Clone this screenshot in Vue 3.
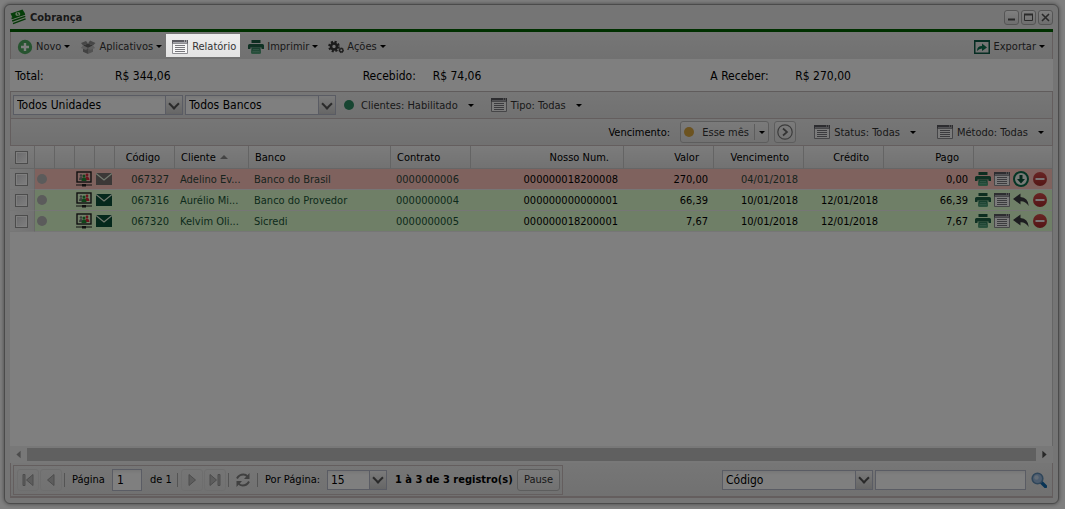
<script setup>
import { ref } from 'vue'

const unit = ref('Todos Unidades')
const bank = ref('Todos Bancos')
const pageNumber = ref('1')
const perPage = ref('15')
const searchField = ref('Código')
const searchText = ref('')

const totals = [
  { label: 'Total:', value: 'R$ 344,06', kind: 'all' },
  { label: 'Recebido:', value: 'R$ 74,06', kind: 'received' },
  { label: 'A Receber:', value: 'R$ 270,00', kind: 'open' }
]

const rows = [
  { code: '067327', client: 'Adelino Ev...', bank: 'Banco do Brasil', contract: '0000000006', number: '000000018200008', value: '270,00', due: '04/01/2018', credit: '', paid: '0,00', open: true },
  { code: '067316', client: 'Aurélio Mi...', bank: 'Banco do Provedor', contract: '0000000004', number: '000000000000001', value: '66,39', due: '10/01/2018', credit: '12/01/2018', paid: '66,39', open: false },
  { code: '067320', client: 'Kelvim Oli...', bank: 'Sicredi', contract: '0000000005', number: '000000018200001', value: '7,67', due: '10/01/2018', credit: '12/01/2018', paid: '7,67', open: false }
]
</script>

<template>
  <svg class="defs" aria-hidden="true">
    <defs>
      <linearGradient id="g-print" x1="0" y1="0" x2="0" y2="1">
        <stop offset="0" stop-color="#2c7a58" />
        <stop offset="1" stop-color="#5aa87f" />
      </linearGradient>
      <linearGradient id="g-remove" x1="0" y1="0" x2="0" y2="1">
        <stop offset="0" stop-color="#d04a48" />
        <stop offset="1" stop-color="#a82c2c" />
      </linearGradient>
    </defs>
    <symbol id="i-money" viewBox="0 0 16 16">
      <path d="M1 6.500 14 2.500 15.500 10 3.500 15.500Z" fill="#d8ecd0" />
      <path d="M1.500 9.500 15 5M2.200 12 15.300 7.300M3 14.600 15.600 9.800" stroke="#0a7010" stroke-width="1.400" />
      <path d="M.500 4.500 12.500 .500 15 4.500 3 9.500Z" fill="#0a7d12" />
      <ellipse cx="7.800" cy="5" rx="2.500" ry="2.100" fill="#d5f0c8" />
      <path d="M7.300 3.600 8.400 6.400" stroke="#0a7d12" stroke-width="1.100" />
    </symbol>
    <symbol id="i-add" viewBox="0 0 16 16">
      <circle cx="8" cy="8" r="7.200" fill="#4ea860" />
      <path d="M8 4v8M4 8h8" stroke="#fff" stroke-width="2.400" />
    </symbol>
    <symbol id="i-box" viewBox="0 0 16 16">
      <path d="M3 7 8 9v6l-5-2.200Z" fill="#858585" />
      <path d="M13 7 8 9v6l5-2.200Z" fill="#a5a5a5" />
      <path d="M3 6.500 8 4.500l5 2L8 9Z" fill="#666" />
      <path d="M3 6.500 1 4l5-2 2 2.500ZM13 6.500 15.500 4 10 1.500 8 4.500Z" fill="#8f8f8f" />
      <path d="M3 6.500.800 9 6 11l2-2ZM13 6.500 15.200 9 10 11 8 9Z" fill="#bcbcbc" />
    </symbol>
    <symbol id="i-list" viewBox="0 0 16 14">
      <path d="M.500 3h15v10.500H.500Z" fill="#f6f6f6" stroke="#8c8c90" />
      <path d="M0 0h16v3.500H0Z" fill="#5a5a60" />
      <path d="M1 2.500h14" stroke="#a4a4aa" />
      <path d="M12 1h1M14 1h1" stroke="#ddd" />
      <path d="M3 5.500h10M3 7.500h10M3 9.500h10M3 11.500h10" stroke="#77777c" />
    </symbol>
    <symbol id="i-print" viewBox="0 0 16 14">
      <path d="M3.500 0h9v3h-9Z" fill="#1a5a40" />
      <path d="M1.500 4h13q1.500 0 1.500 1.500V9h-2.500V7.500h-11V9H0V5.500Q0 4 1.500 4Z" fill="#1f6347" />
      <path d="M3.500 7.500h9L13 12.500q0 1.500-1.500 1.500h-7Q3 14 3 12.500Z" fill="url(#g-print)" />
      <path d="M5 9.500h6M4.500 11.500h7" stroke="#75b597" stroke-width=".7" />
    </symbol>
    <symbol id="i-gears" viewBox="0 0 16 14">
      <circle cx="6" cy="6.500" r="4.700" fill="none" stroke="#383838" stroke-width="2.200" stroke-dasharray="2.100 1.590" />
      <circle cx="6" cy="6.500" r="3" fill="none" stroke="#383838" stroke-width="2.600" />
      <circle cx="13.300" cy="10.300" r="1.700" fill="none" stroke="#383838" stroke-width="1.400" />
      <circle cx="13.300" cy="10.300" r="2.400" fill="none" stroke="#383838" stroke-width="1" stroke-dasharray="1 .9" />
    </symbol>
    <symbol id="i-export" viewBox="0 0 16 14">
      <rect x=".75" y=".75" width="14.500" height="12.500" fill="none" stroke="#0c5a46" stroke-width="1.500" />
      <path d="M0 0h16v2H0Z" fill="#0c5a46" />
      <path d="M3 11q0-5 5-5V3.500L13 7.500 8 11V8.500Q5 8.500 3 11Z" fill="#0c7050" />
    </symbol>
    <symbol id="i-screen" viewBox="0 0 16 16">
      <rect x="1" y="1" width="14" height="10" fill="none" stroke="#202020" stroke-width="1.400" />
      <circle cx="5" cy="4.500" r="1.300" fill="#777" /><path d="M3 9q0-3 2-3t2 3Z" fill="#777" />
      <circle cx="11" cy="4" r="1.400" fill="#d8283c" /><path d="M9 9q0-3.500 2-3.500t2.500 3.500Z" fill="#d8283c" />
      <circle cx="8" cy="5" r="1.500" fill="#238a35" /><path d="M5.500 10q0-3.500 2.500-3.500T10.500 10Z" fill="#238a35" />
      <path d="M0 14h6M10 14h6" stroke="#202020" stroke-width="1" />
      <path d="M6 13h4v2.500H6Z" fill="#202020" />
    </symbol>
    <symbol id="i-mail" viewBox="0 0 16 12">
      <path d="M0 0h16v12H0Z" fill="currentColor" />
      <path d="M0 .500 8 7 16 .500" fill="none" stroke="#e8f5e0" stroke-width="1.200" />
    </symbol>
    <symbol id="i-down" viewBox="0 0 16 16">
      <circle cx="8" cy="8" r="7" fill="#eef5ee" stroke="#0b6b4a" stroke-width="2" />
      <path d="M6.500 4h3v4H12l-4 4.500L4 8h2.500Z" fill="#0a5038" />
    </symbol>
    <symbol id="i-reply" viewBox="0 0 16 14">
      <path d="M0 6 7.500.500V4Q15 4.500 15.800 13 12.500 8 7.500 8.200v3.300Z" fill="#3b3b40" />
    </symbol>
    <symbol id="i-remove" viewBox="0 0 16 16">
      <circle cx="8" cy="8" r="7" fill="url(#g-remove)" />
      <path d="M3.500 8h9" stroke="#f4e8e8" stroke-width="2" />
    </symbol>
    <symbol id="i-next" viewBox="0 0 16 16">
      <circle cx="8" cy="8" r="7.200" fill="none" stroke="#777" stroke-width="1.200" />
      <path d="M6 4.500 10 8l-4 3.500" fill="none" stroke="#666" stroke-width="1.700" />
    </symbol>
    <symbol id="i-refresh" viewBox="0 0 16 16">
      <path d="M2 6.500Q4 2.500 8.500 2.500 11 2.500 12.300 4.500M14 9.500Q12 13.500 7.500 13.500 5 13.500 3.700 11.500" fill="none" stroke="#808080" stroke-width="2" />
      <path d="M14.500 1v6H9ZM1.500 15V9H7Z" fill="#808080" />
    </symbol>
    <symbol id="i-search" viewBox="0 0 16 16">
      <path d="m10.500 10.500 4 4" stroke="#1268aa" stroke-width="3.400" stroke-linecap="round" />
      <circle cx="6.500" cy="6.500" r="5.300" fill="#98b8dc" stroke="#5f8cb4" stroke-width="1.600" />
      <circle cx="5.500" cy="5.500" r="2.200" fill="#c6d8ea" />
    </symbol>
  </svg>

  <main class="window">
    <header class="titlebar">
      <svg class="icon money"><use href="#i-money" /></svg>
      <h1>Cobrança</h1>
      <div class="controls">
        <button type="button" aria-label="Minimizar"><svg viewBox="0 0 13 13"><path d="M3 8.500h7" stroke="#555" stroke-width="2" /></svg></button>
        <button type="button" aria-label="Maximizar"><svg viewBox="0 0 13 13"><path d="M2.500 3.500h8v6h-8Z" fill="none" stroke="#555" /><path d="M2 3.500h9" stroke="#555" stroke-width="2" /></svg></button>
        <button type="button" aria-label="Fechar"><svg viewBox="0 0 13 13"><path d="m3 3 7 7M10 3l-7 7" stroke="#555" stroke-width="1.600" /></svg></button>
      </div>
    </header>

    <section class="panel">
      <nav class="bar toolbar">
        <button type="button" class="tool"><svg class="icon"><use href="#i-add" /></svg>Novo<i class="caret"></i></button>
        <button type="button" class="tool"><svg class="icon"><use href="#i-box" /></svg>Aplicativos<i class="caret"></i></button>
        <button type="button" class="tool spotlight"><svg class="icon flat"><use href="#i-list" /></svg>Relatório</button>
        <button type="button" class="tool"><svg class="icon flat"><use href="#i-print" /></svg>Imprimir<i class="caret"></i></button>
        <button type="button" class="tool"><svg class="icon flat"><use href="#i-gears" /></svg>Ações<i class="caret"></i></button>
        <button type="button" class="tool push"><svg class="icon flat"><use href="#i-export" /></svg>Exportar<i class="caret"></i></button>
      </nav>

      <dl class="totals">
        <div v-for="t in totals" :key="t.kind" :class="t.kind"><dt>{{ t.label }}</dt><dd>{{ t.value }}</dd></div>
      </dl>

      <div class="bar filters">
        <span class="combo unit"><select v-model="unit" aria-label="Unidade"><option>Todos Unidades</option></select><i class="arrow"></i></span>
        <span class="combo bank"><select v-model="bank" aria-label="Banco"><option>Todos Bancos</option></select><i class="arrow"></i></span>
        <button type="button" class="filter"><i class="dot on"></i>Clientes: Habilitado<i class="caret"></i></button>
        <button type="button" class="filter type"><svg class="icon flat"><use href="#i-list" /></svg>Tipo: Todas<i class="caret"></i></button>
      </div>

      <div class="bar filters right">
        <span class="due-label">Vencimento:</span>
        <button type="button" class="boxed split"><i class="dot month"></i>Esse mês<span class="split-arrow"><i class="caret"></i></span></button>
        <button type="button" class="boxed next" aria-label="Próximo"><svg class="icon"><use href="#i-next" /></svg></button>
        <button type="button" class="filter status"><svg class="icon flat"><use href="#i-list" /></svg>Status: Todas<i class="caret"></i></button>
        <button type="button" class="filter method"><svg class="icon flat"><use href="#i-list" /></svg>Método: Todas<i class="caret"></i></button>
      </div>

      <div class="grid">
        <table>
          <colgroup>
            <col class="w-check"><col class="w-icon"><col class="w-icon"><col class="w-icon"><col class="w-icon">
            <col class="w-code"><col class="w-client"><col class="w-bank"><col class="w-contract"><col class="w-number">
            <col class="w-90"><col class="w-90"><col class="w-contract"><col class="w-90"><col>
          </colgroup>
          <thead>
            <tr>
              <th class="check"><input type="checkbox" aria-label="Selecionar todos"></th>
              <th></th><th></th><th></th><th></th>
              <th class="num">Código</th>
              <th>Cliente<i class="sort"></i></th>
              <th>Banco</th>
              <th>Contrato</th>
              <th class="num">Nosso Num.</th>
              <th class="num">Valor</th>
              <th class="num">Vencimento</th>
              <th class="num">Crédito</th>
              <th class="num">Pago</th>
              <th></th>
            </tr>
          </thead>
          <tbody>
            <tr v-for="r in rows" :key="r.code" :class="r.open ? 'unpaid' : 'paid'">
              <td class="check"><input type="checkbox" :aria-label="'Selecionar ' + r.code"></td>
              <td class="glyph"><i class="dot idle"></i></td>
              <td></td>
              <td class="glyph"><svg class="icon"><use href="#i-screen" /></svg></td>
              <td class="glyph"><svg class="icon mail"><use href="#i-mail" /></svg></td>
              <td class="num tint">{{ r.code }}</td>
              <td class="tint">{{ r.client }}</td>
              <td class="tint">{{ r.bank }}</td>
              <td class="tint">{{ r.contract }}</td>
              <td class="num">{{ r.number }}</td>
              <td class="num">{{ r.value }}</td>
              <td class="num" :class="{ tint: r.open }">{{ r.due }}</td>
              <td class="num">{{ r.credit }}</td>
              <td class="num">{{ r.paid }}</td>
              <td class="actions">
                <div>
                  <button type="button" aria-label="Imprimir"><svg class="icon flat"><use href="#i-print" /></svg></button>
                  <button type="button" aria-label="Detalhes"><svg class="icon flat"><use href="#i-list" /></svg></button>
                  <button v-if="r.open" type="button" aria-label="Baixar"><svg class="icon"><use href="#i-down" /></svg></button>
                  <button v-else type="button" aria-label="Estornar"><svg class="icon flat"><use href="#i-reply" /></svg></button>
                  <button type="button" aria-label="Remover"><svg class="icon"><use href="#i-remove" /></svg></button>
                </div>
              </td>
            </tr>
          </tbody>
        </table>
      </div>

      <div class="scroller">
        <svg viewBox="0 0 16 16"><path d="M10 4.500v7L6 8Z" fill="#999" /></svg>
        <div class="thumb"></div>
        <svg viewBox="0 0 16 16"><path d="M6 4.500v7L10 8Z" fill="#505050" /></svg>
      </div>

      <footer class="bar footer">
        <div class="pager">
          <button type="button" class="page" aria-label="Primeira"><svg viewBox="0 0 16 16"><path d="M3 2.500h2v11H3ZM13 2.500v11L6.500 8Z" /></svg></button>
          <button type="button" class="page" aria-label="Anterior"><svg viewBox="0 0 16 16"><path d="M11 2.500v11L4.500 8Z" /></svg></button>
          <i class="sep"></i>
          <label class="page-label" for="page">Página</label>
          <input id="page" v-model="pageNumber" class="field page-input" type="text">
          <span class="of">de 1</span>
          <i class="sep"></i>
          <button type="button" class="page" aria-label="Próxima"><svg viewBox="0 0 16 16"><path d="M5 2.500v11L11.500 8Z" /></svg></button>
          <button type="button" class="page" aria-label="Última"><svg viewBox="0 0 16 16"><path d="M11 2.500h2v11h-2ZM3 2.500v11L9.500 8Z" /></svg></button>
          <i class="sep"></i>
          <button type="button" class="reload" aria-label="Atualizar"><svg class="icon"><use href="#i-refresh" /></svg></button>
          <i class="sep"></i>
          <label class="per-label" for="per">Por Página:</label>
          <span class="combo per"><select id="per" v-model="perPage"><option>15</option></select><i class="arrow"></i></span>
          <strong>1 à 3 de 3 registro(s)</strong>
          <button type="button" class="boxed pause">Pause</button>
        </div>
        <div class="search">
          <span class="combo by"><select v-model="searchField" aria-label="Campo"><option>Código</option></select><i class="arrow"></i></span>
          <input v-model="searchText" class="field query" type="text" aria-label="Busca">
          <button type="button" class="reload" aria-label="Buscar"><svg class="icon"><use href="#i-search" /></svg></button>
        </div>
      </footer>
    </section>
  </main>
</template>

<style>
body {
  background: #fff;
  overflow: hidden;
}
</style>

<style scoped>
* {
  box-sizing: border-box;
}
.defs {
  position: absolute;
  width: 0;
  height: 0;
}
.window {
  display: flex;
  flex-direction: column;
  height: calc(100vh - 9px);
  margin: 4px 6px 5px 4px;
  padding: 0 5px 5px;
  border: 1px solid #969696;
  border-radius: 6px;
  background: #ebebeb;
  box-shadow: 0 0 4px #888;
  font-family: "DejaVu Sans Condensed", "Noto Sans", sans-serif;
  font-size: 11px;
  color: #000;
}
button,
input,
select {
  margin: 0;
  font: inherit;
  color: inherit;
}
button {
  padding: 0;
  border: 0;
  background: none;
}
.icon {
  flex: none;
  display: block;
  width: 16px;
  height: 16px;
}
.flat {
  height: 14px;
}
.titlebar {
  display: flex;
  align-items: center;
  height: 24px;
  flex: none;
}
.money {
  margin-right: 4px;
}
h1 {
  margin: 0;
  font-size: 11px;
  color: #333;
}
.controls {
  display: flex;
  gap: 2px;
  margin-left: auto;
}
.controls button {
  width: 15px;
  height: 15px;
  border: 1px solid #aaa;
  border-radius: 3px;
  background: linear-gradient(#fff, #ddd);
}
.controls svg {
  display: block;
}
.panel {
  flex: 1;
  display: flex;
  flex-direction: column;
  min-height: 0;
  border-top: 3px solid #006000;
  background: #fff;
}
.bar {
  display: flex;
  align-items: center;
  flex: none;
  border: 0 solid #c9bcbc;
  border-width: 0 1px;
  background: linear-gradient(#ededed, #e2e2e2);
}
.toolbar {
  height: 27px;
  padding: 0 5px 0 4px;
  gap: 6px;
}
.tool {
  display: flex;
  align-items: center;
  gap: 3px;
  height: 23px;
  padding: 2px 2px 0;
  color: #333;
}
.push {
  margin-left: auto;
}
.spotlight {
  position: relative;
  z-index: 10;
  margin-left: -4px;
  gap: 4px;
  padding: 2px 4px 0 6px;
  box-shadow: 0 0 0 200vmax rgba(0, 0, 0, 0.5);
}
.caret {
  width: 0;
  height: 0;
  border: 3px solid transparent;
  border-top-color: #000;
  border-bottom: 0;
}
.totals {
  display: grid;
  grid-template-columns: repeat(3, 1fr);
  flex: none;
  height: 33px;
  margin: 0;
  padding-top: 2px;
  align-items: center;
  border-bottom: 1px solid #c0b8b8;
  font-size: 12px;
}
.totals div {
  display: flex;
  padding-left: 5px;
}
.totals dt {
  width: 100px;
}
.totals .received dt {
  width: 70px;
}
.totals .open dt {
  width: 85px;
}
.totals dd {
  margin: 0;
}
.filters {
  height: 27px;
  padding: 0 8px 0 2px;
  border-bottom: 1px solid #c9bcbc;
}
.combo {
  display: flex;
  height: 20px;
  border: 1px solid #b5b8c8;
  background: linear-gradient(#eee, #fff 4px);
  font-size: 12px;
}
.combo select {
  flex: 1;
  min-width: 0;
  padding: 0 3px;
  border: 0;
  background: none;
  appearance: none;
}
.arrow {
  display: flex;
  align-items: center;
  justify-content: center;
  width: 17px;
  border-left: 1px solid #b5b8c8;
  background: linear-gradient(#f6f6f6, #ccc);
}
.arrow::after {
  content: "";
  width: 6px;
  height: 6px;
  margin-bottom: 3px;
  border: solid #555;
  border-width: 0 2px 2px 0;
  transform: rotate(45deg);
}
.unit {
  width: 170px;
  margin-right: 2px;
}
.bank {
  width: 151px;
  margin-right: 8px;
}
.filter {
  display: flex;
  align-items: center;
  gap: 4px;
  color: #333;
}
.filter .caret {
  margin-left: 6px;
}
.type {
  margin-left: 17px;
}
.dot {
  flex: none;
  display: block;
  width: 10px;
  height: 10px;
  border-radius: 50%;
}
.on {
  margin-right: 3px;
  background: #2e8b62;
}
.month {
  margin-right: 8px;
  background: #d8a640;
}
.right {
  justify-content: flex-end;
}
.due-label {
  margin-right: 10px;
}
.boxed {
  display: flex;
  align-items: center;
  justify-content: center;
  height: 22px;
  border: 1px solid #bbb;
  border-radius: 3px;
  background: linear-gradient(#f6f6f6, #e4e4e4);
  color: #333;
}
.split {
  width: 89px;
}
.split-arrow {
  display: flex;
  align-items: center;
  height: 16px;
  margin-left: 5px;
  padding-left: 4px;
  border-left: 1px solid #bbb;
}
.next {
  width: 22px;
  margin-left: 5px;
}
.status {
  margin-left: 18px;
}
.method {
  margin-left: 21px;
}
.grid {
  flex: 1;
  min-height: 0;
  border-right: 1px solid #ccc;
  overflow: hidden;
}
table {
  width: 100%;
  table-layout: fixed;
  border-collapse: separate;
  border-spacing: 0;
}
.w-check { width: 25px; }
.w-icon { width: 20px; }
.w-code { width: 60px; }
.w-client { width: 74px; }
.w-bank { width: 142px; }
.w-contract { width: 80px; }
.w-number { width: 153px; }
.w-90 { width: 90px; }
th {
  height: 23px;
  padding: 0 6px;
  border-right: 1px solid #c8c8c8;
  border-bottom: 1px solid #ccc;
  background: linear-gradient(#f8f8f8, #e4e4e4);
  font-weight: normal;
  text-align: left;
  white-space: nowrap;
}
th:last-child {
  border-right: 0;
}
th.num {
  padding-right: 14px;
}
.num {
  text-align: right;
}
td {
  height: 21px;
  padding: 0 5px;
  border-bottom: 1px solid #ededed;
  white-space: nowrap;
}
td.num {
  padding: 0 6px 0 0;
}
.sort {
  display: inline-block;
  margin: 0 0 2px 4px;
  border: 4px solid transparent;
  border-top: 0;
  border-bottom-color: #888;
}
.unpaid td {
  background: #ffc5bc;
}
.paid td {
  background: #dfffcf;
}
.tint {
  color: #1a5638;
}
.unpaid .tint {
  color: #30483c;
}
.check,
.unpaid td.check,
.paid td.check {
  padding: 0 0 0 5px;
}
.unpaid td.check,
.paid td.check {
  border-right: 1px solid #d0d0d0;
  background: linear-gradient(90deg, #f4f4f4, #e4e4e4);
}
.check input {
  display: block;
  width: 13px;
  height: 13px;
  border: 1px solid #999;
  background: linear-gradient(135deg, #d4d4d8, #fff);
  box-shadow: inset 0 0 0 1px #fff;
  outline: 0;
  appearance: none;
}
td.glyph {
  padding: 0 0 0 1px;
}
.idle {
  margin-left: 1px;
  background: #b6b6b6;
}
.mail {
  height: 12px;
  color: #0a5038;
}
.unpaid .mail {
  color: #77706f;
}
td.actions {
  padding: 0 0 0 1px;
}
.actions div {
  display: flex;
  align-items: center;
  gap: 3px;
}
.scroller {
  display: flex;
  align-items: center;
  flex: none;
  height: 17px;
  background: #f1f1f1;
}
.scroller svg {
  width: 17px;
}
.thumb {
  flex: 1;
  height: 13px;
  background: #c1c1c1;
}
.footer {
  height: 35px;
  padding: 0 2px;
  border-bottom-width: 2px;
  justify-content: space-between;
}
.pager {
  display: flex;
  align-items: center;
  height: 30px;
  padding: 0 2px 0 3px;
  border: 1px solid #c9bcbc;
}
.page {
  width: 22px;
  height: 22px;
  margin-right: 1px;
  padding: 2px;
  border: 1px solid #ddd;
  border-radius: 3px;
}
.page svg {
  display: block;
  width: 16px;
  height: 16px;
  fill: #bbb;
  stroke: #999;
  stroke-width: 1;
}
.sep {
  width: 1px;
  height: 14px;
  margin: 0 3px 0 1px;
  background: #a8a8a8;
}
.page-label {
  width: 44px;
  padding-left: 4px;
}
.field {
  height: 20px;
  padding: 0 4px;
  border: 1px solid #b5b8c8;
  border-radius: 0;
  background: linear-gradient(#eee, #fff 4px);
  font-size: 12px;
}
.page-input {
  width: 30px;
  height: 22px;
}
.of {
  width: 34px;
  padding-left: 8px;
}
.reload {
  padding: 0 3px;
}
.pager .reload {
  margin-right: 2px;
}
.per-label {
  width: 66px;
  padding-left: 4px;
}
.per {
  width: 60px;
}
.pager strong {
  width: 130px;
  padding-left: 8px;
  white-space: nowrap;
}
.pause {
  width: 43px;
}
.search {
  display: flex;
  align-items: center;
}
.by {
  width: 151px;
  margin-right: 2px;
}
.query {
  width: 151px;
  margin-right: 2px;
}
</style>
